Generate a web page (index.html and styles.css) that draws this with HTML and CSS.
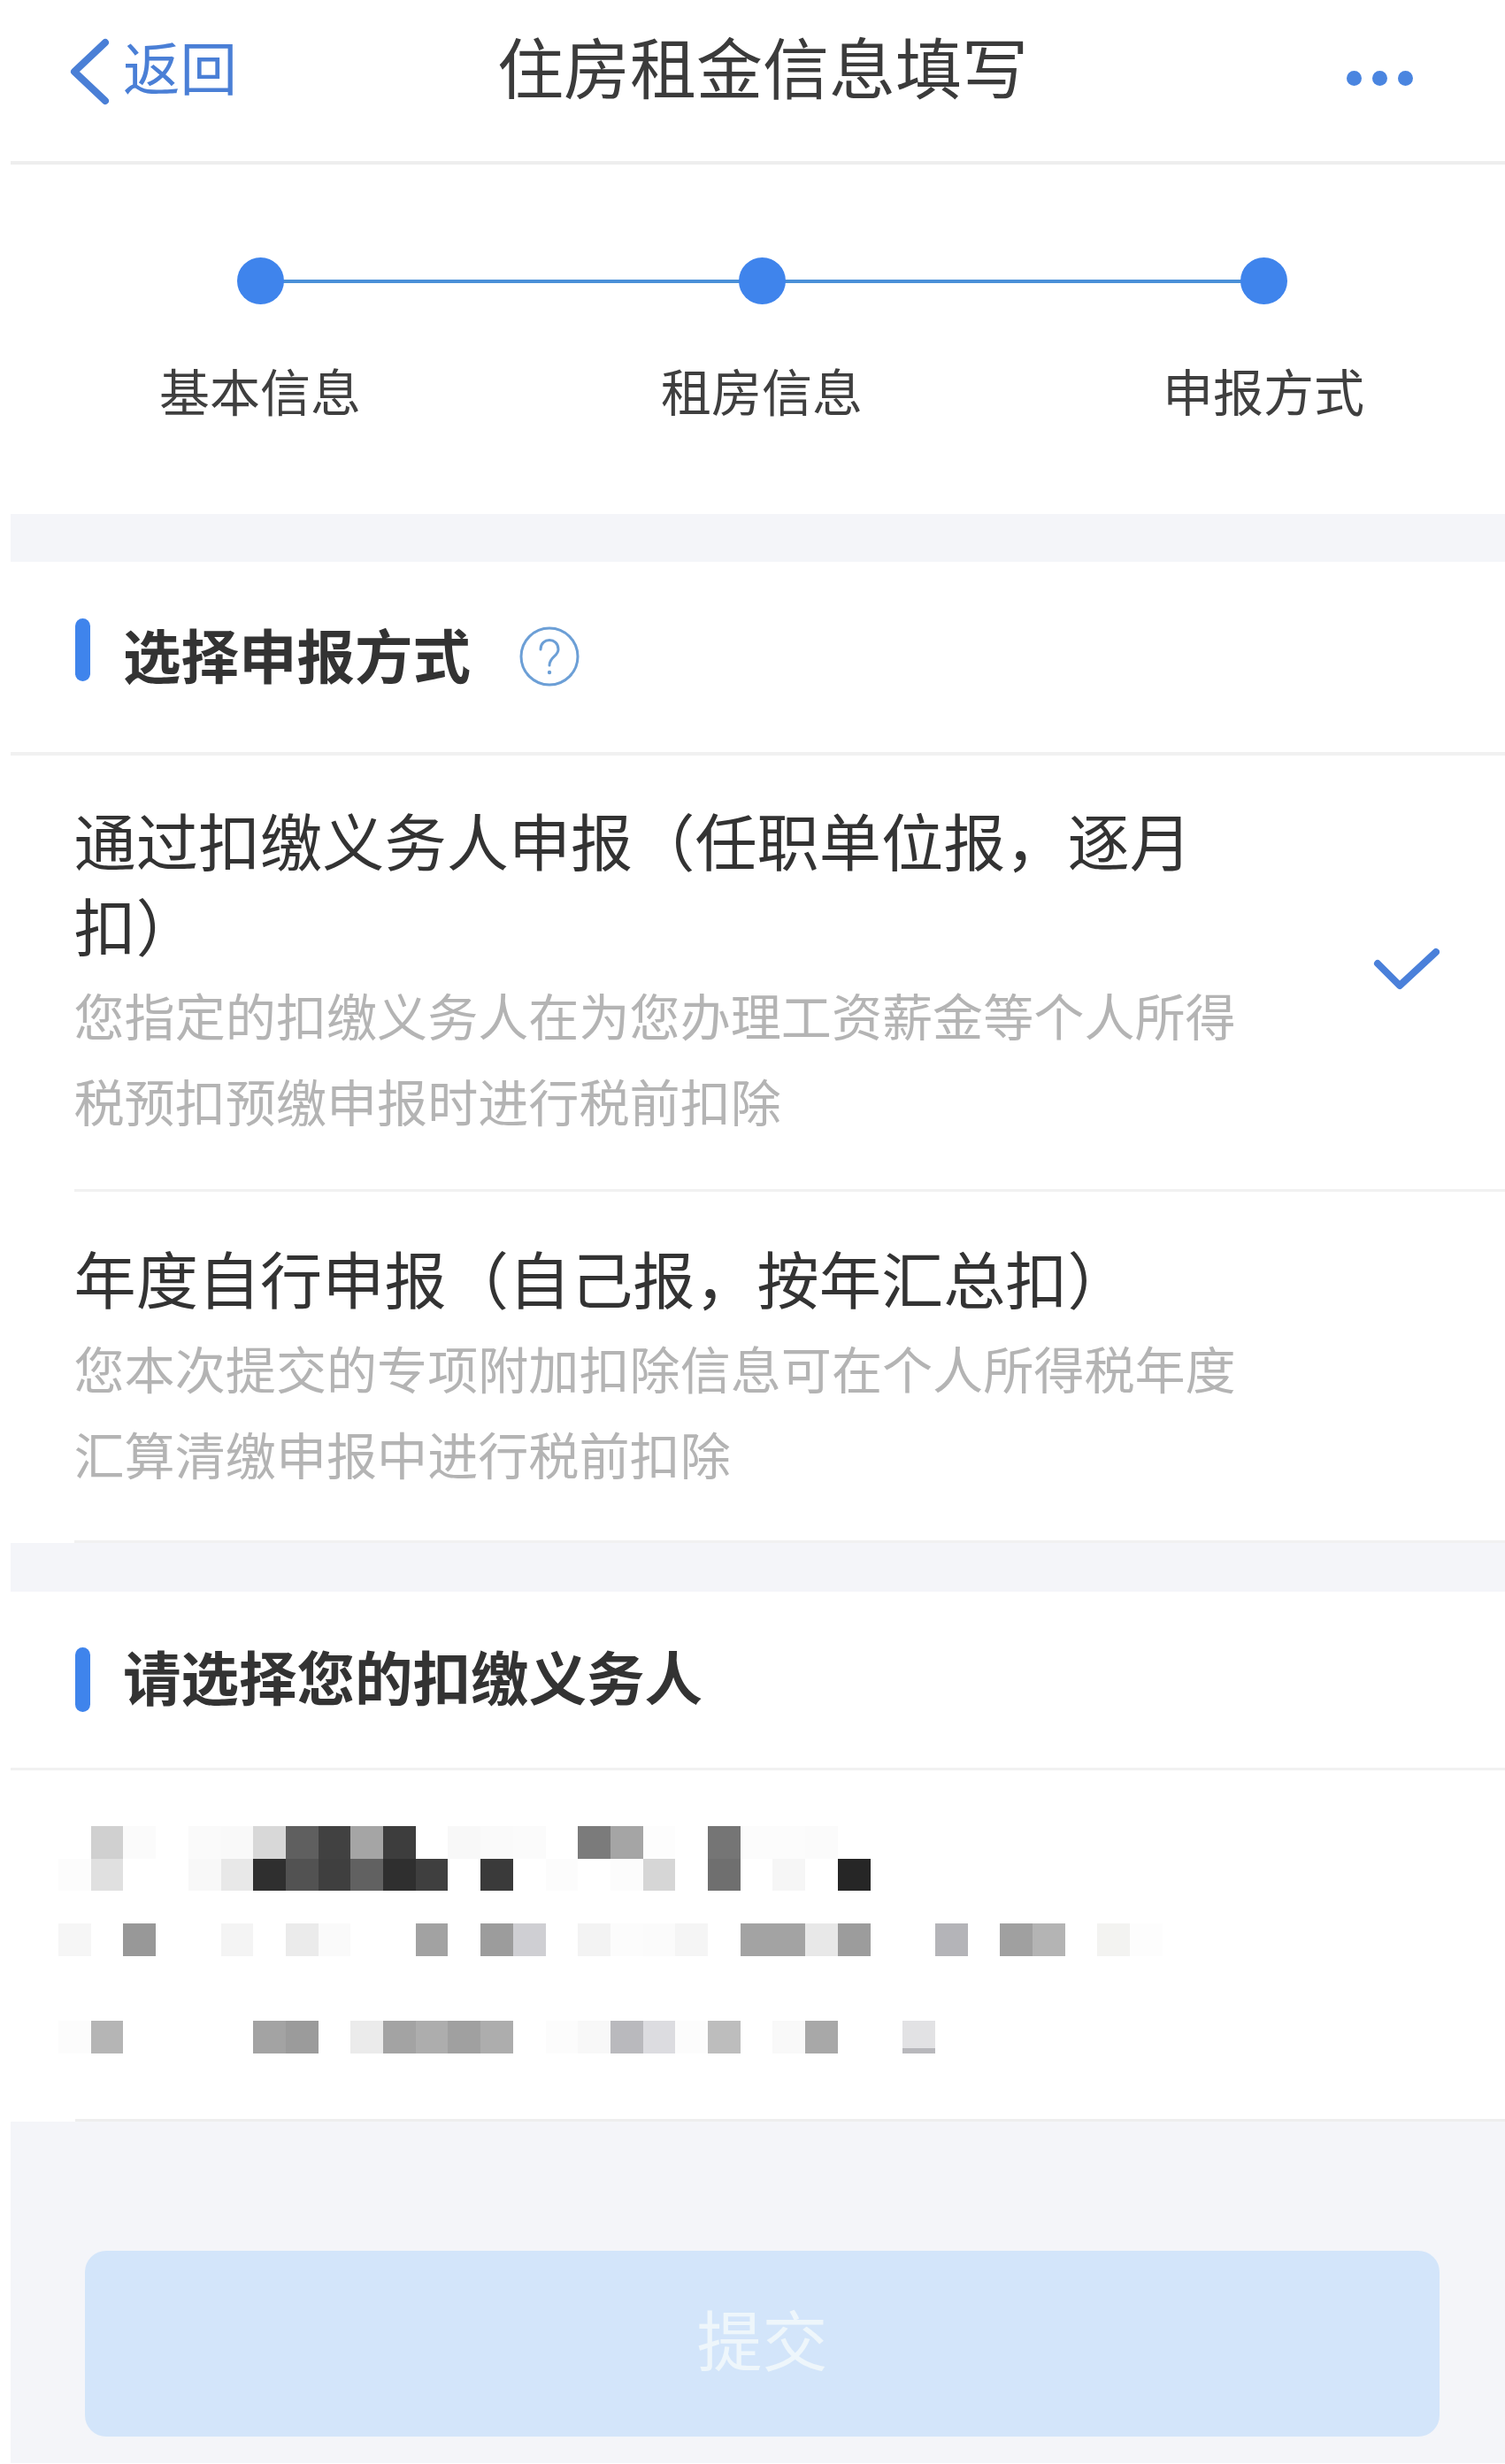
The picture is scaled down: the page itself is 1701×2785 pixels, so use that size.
FILE: index.html
```html
<!DOCTYPE html>
<html lang="zh-CN">

<head>
  <meta charset="UTF-8" />
  <meta name="viewport" content="width=device-width, initial-scale=1.0" />
  <title>住房租金信息填写</title>
  <link rel="stylesheet" href="styles.css">
</head>

<body>
  <div class="nav-bar">
    <div class="nav-back">
      <svg class="back-icon" viewBox="0 0 48 76" width="48" height="76">
        <path d="M41 5 L6 38 L41 71" fill="none" stroke="#4a7fd6" stroke-width="8" stroke-linecap="round" stroke-linejoin="round" />
      </svg>
      <span>返回</span>
    </div>
    <h1 class="nav-title">住房租金信息填写</h1>
    <div class="nav-more"><i></i><i></i><i></i></div>
  </div>

  <div class="stepper">
    <div class="step">
      <div class="step-dot"></div>
      <div class="step-label">基本信息</div>
    </div>
    <div class="step">
      <div class="step-dot"></div>
      <div class="step-label">租房信息</div>
    </div>
    <div class="step">
      <div class="step-dot"></div>
      <div class="step-label">申报方式</div>
    </div>
  </div>

  <div class="band"></div>

  <div class="section-head">
    <span class="head-bar"></span>
    <h2 class="head-title">选择申报方式</h2>
    <svg class="help-icon" viewBox="0 0 68 68" width="68" height="68">
      <circle cx="34" cy="34" r="32" fill="none" stroke="#6c9fd6" stroke-width="3" />
      <path d="M24 26 C24 12 44 12 44 26 C44 34 34 34 34 44" fill="none" stroke="#6c9fd6" stroke-width="3" stroke-linecap="round" />
      <circle cx="34" cy="52" r="2.2" fill="#6c9fd6" />
    </svg>
  </div>

  <div class="option">
    <div class="option-text">
      <div class="option-title">通过扣缴义务人申报（任职单位报，逐月扣）</div>
      <div class="option-desc">您指定的扣缴义务人在为您办理工资薪金等个人所得税预扣预缴申报时进行税前扣除</div>
    </div>
    <svg class="check-icon" viewBox="0 0 76 56" width="76" height="56">
      <path d="M6 19 L31 44 L72 6" fill="none" stroke="#4a80da" stroke-width="8" stroke-linecap="round" stroke-linejoin="round" />
    </svg>
  </div>

  <div class="option option-second">
    <div class="option-text">
      <div class="option-title">年度自行申报（自己报，按年汇总扣）</div>
      <div class="option-desc">您本次提交的专项附加扣除信息可在个人所得税年度汇算清缴申报中进行税前扣除</div>
    </div>
  </div>

  <div class="band band-small"></div>

  <div class="section-head section-head-payer">
    <span class="head-bar"></span>
    <h2 class="head-title">请选择您的扣缴义务人</h2>
  </div>

  <div class="payer">
    <!-- mosaic over the employer name and address -->
    <svg class="mosaic" viewBox="0 0 35 7" width="1284.5" height="257" shape-rendering="crispEdges">
      <g>
        <rect x="1" y="0" width="1" height="1" fill="#d0d0d0" />
        <rect x="2" y="0" width="1" height="1" fill="#fbfbfb" />
        <rect x="4" y="0" width="1" height="1" fill="#fafafa" />
        <rect x="5" y="0" width="1" height="1" fill="#f9f9f9" />
        <rect x="6" y="0" width="1" height="1" fill="#d8d8d8" />
        <rect x="7" y="0" width="1" height="1" fill="#5f5f5f" />
        <rect x="8" y="0" width="1" height="1" fill="#414141" />
        <rect x="9" y="0" width="1" height="1" fill="#a5a5a5" />
        <rect x="10" y="0" width="1" height="1" fill="#3d3d3d" />
        <rect x="12" y="0" width="1" height="1" fill="#f8f8f8" />
        <rect x="13" y="0" width="1" height="1" fill="#fafafa" />
        <rect x="14" y="0" width="1" height="1" fill="#fbfbfb" />
        <rect x="16" y="0" width="1" height="1" fill="#7b7b7b" />
        <rect x="17" y="0" width="1" height="1" fill="#a5a5a5" />
        <rect x="18" y="0" width="1" height="1" fill="#fdfdfd" />
        <rect x="20" y="0" width="1" height="1" fill="#757575" />
        <rect x="21" y="0" width="1" height="1" fill="#fcfcfc" />
        <rect x="22" y="0" width="1" height="1" fill="#fcfcfc" />
        <rect x="23" y="0" width="1" height="1" fill="#fbfbfb" />
      </g>
      <g>
        <rect x="0" y="1" width="1" height="1" fill="#fcfcfc" />
        <rect x="1" y="1" width="1" height="1" fill="#e0e0e0" />
        <rect x="4" y="1" width="1" height="1" fill="#f8f8f8" />
        <rect x="5" y="1" width="1" height="1" fill="#e8e8e8" />
        <rect x="6" y="1" width="1" height="1" fill="#2f2f2f" />
        <rect x="7" y="1" width="1" height="1" fill="#525252" />
        <rect x="8" y="1" width="1" height="1" fill="#3f3f3f" />
        <rect x="9" y="1" width="1" height="1" fill="#616161" />
        <rect x="10" y="1" width="1" height="1" fill="#2f2f2f" />
        <rect x="11" y="1" width="1" height="1" fill="#3f3f3f" />
        <rect x="13" y="1" width="1" height="1" fill="#3a3a3a" />
        <rect x="15" y="1" width="1" height="1" fill="#fcfcfc" />
        <rect x="17" y="1" width="1" height="1" fill="#fcfcfc" />
        <rect x="18" y="1" width="1" height="1" fill="#d6d6d6" />
        <rect x="20" y="1" width="1" height="1" fill="#6f6f6f" />
        <rect x="22" y="1" width="1" height="1" fill="#f6f6f6" />
        <rect x="24" y="1" width="1" height="1" fill="#262626" />
      </g>
      <g>
        <rect x="0" y="3" width="1" height="1" fill="#f6f6f6" />
        <rect x="2" y="3" width="1" height="1" fill="#989898" />
        <rect x="5" y="3" width="1" height="1" fill="#f4f4f4" />
        <rect x="7" y="3" width="1" height="1" fill="#ebebeb" />
        <rect x="8" y="3" width="1" height="1" fill="#fafafa" />
        <rect x="11" y="3" width="1" height="1" fill="#a2a2a2" />
        <rect x="13" y="3" width="1" height="1" fill="#9c9c9c" />
        <rect x="14" y="3" width="1" height="1" fill="#cfcfd3" />
        <rect x="16" y="3" width="1" height="1" fill="#f3f3f3" />
        <rect x="17" y="3" width="1" height="1" fill="#fcfcfc" />
        <rect x="18" y="3" width="1" height="1" fill="#fbfbfb" />
        <rect x="19" y="3" width="1" height="1" fill="#f5f5f5" />
        <rect x="21" y="3" width="1" height="1" fill="#a3a3a3" />
        <rect x="22" y="3" width="1" height="1" fill="#a3a3a3" />
        <rect x="23" y="3" width="1" height="1" fill="#e8e8e8" />
        <rect x="24" y="3" width="1" height="1" fill="#9c9c9c" />
        <rect x="27" y="3" width="1" height="1" fill="#b4b4b8" />
        <rect x="29" y="3" width="1" height="1" fill="#a0a0a0" />
        <rect x="30" y="3" width="1" height="1" fill="#b4b4b4" />
        <rect x="32" y="3" width="1" height="1" fill="#f3f3f1" />
        <rect x="33" y="3" width="1" height="1" fill="#fdfdfd" />
      </g>
      <g>
        <rect x="0" y="6" width="1" height="1" fill="#fcfcfc" />
        <rect x="1" y="6" width="1" height="1" fill="#b5b5b5" />
        <rect x="6" y="6" width="1" height="1" fill="#a3a3a3" />
        <rect x="7" y="6" width="1" height="1" fill="#9b9b9b" />
        <rect x="9" y="6" width="1" height="1" fill="#ebebeb" />
        <rect x="10" y="6" width="1" height="1" fill="#a3a3a3" />
        <rect x="11" y="6" width="1" height="1" fill="#adadad" />
        <rect x="12" y="6" width="1" height="1" fill="#a0a0a0" />
        <rect x="13" y="6" width="1" height="1" fill="#adadad" />
        <rect x="15" y="6" width="1" height="1" fill="#fcfcfc" />
        <rect x="16" y="6" width="1" height="1" fill="#f8f8f8" />
        <rect x="17" y="6" width="1" height="1" fill="#b9b9bd" />
        <rect x="18" y="6" width="1" height="1" fill="#dcdce0" />
        <rect x="19" y="6" width="1" height="1" fill="#fcfcfc" />
        <rect x="20" y="6" width="1" height="1" fill="#bdbdbd" />
        <rect x="22" y="6" width="1" height="1" fill="#f9f9f9" />
        <rect x="23" y="6" width="1" height="1" fill="#a8a8a8" />
        <rect x="26" y="6" width="1" height="1" fill="#e2e2e4" />
        <rect x="26" y="6.85" width="1" height="0.15" fill="#b8b8bc" />
      </g>
    </svg>
  </div>

  <div class="payer-rule"></div>

  <div class="footer">
    <button type="button" class="submit-btn">提交</button>
  </div>
</body>

</html>
```

FILE: styles.css
```css
* {
  box-sizing: border-box;
  margin: 0;
  padding: 0;
  font-family: "Noto Sans CJK SC", "Noto Sans", sans-serif;
}

body {
  background-color: #fff;
  color: #333;
  width: 1701px;
}

.nav-bar {
  display: grid;
  grid-template-columns: 484px auto 1fr;
  align-items: center;
  height: 186px;
  margin-left: 12px;
  padding: 0 104px 34px 66px;
  border-bottom: 4px solid #eeeeee;
}

.nav-back {
  display: flex;
  align-items: center;
  gap: 13px;
  color: #4a7fd6;
  font-size: 64.5px;
  line-height: 76px;
}

.back-icon {
  display: block;
  margin-top: 14px;
}

.nav-title {
  color: #3b3b3b;
  font-size: 75px;
  font-weight: 400;
  line-height: 90px;
  white-space: nowrap;
}

.nav-more {
  display: flex;
  justify-content: flex-end;
  gap: 12px;
  margin-top: 28px;
}

.nav-more i {
  width: 17px;
  height: 17px;
  border-radius: 50%;
  background-color: #4a85e0;
}

.stepper {
  display: grid;
  grid-template-columns: repeat(3, 567px);
  height: 395px;
  padding: 105px 0 0 10.5px;
}

.step {
  position: relative;
  display: flex;
  flex-direction: column;
  align-items: center;
}

.step:not(:last-child)::after {
  content: "";
  position: absolute;
  top: 25px;
  left: 50%;
  width: 100%;
  height: 4px;
  background-color: #4a90d8;
}

.step-dot {
  position: relative;
  z-index: 1;
  width: 53px;
  height: 53px;
  border-radius: 50%;
  background-color: #3f84ec;
}

.step-label {
  margin-top: 61px;
  color: #3f3f3f;
  font-size: 57px;
  line-height: 70px;
}

.band {
  height: 54px;
  margin-left: 12px;
  background-color: #f4f5f9;
}

.band-small {
  height: 55px;
}

.section-head {
  display: flex;
  align-items: flex-start;
  height: 219px;
  margin-left: 12px;
  padding: 64px 0 0 73px;
  border-bottom: 4px solid #f1f1f1;
}

.head-bar {
  flex: none;
  width: 17px;
  height: 71px;
  margin-right: 37px;
  border-radius: 9px;
  background-color: #3f84ec;
}

.head-title {
  color: #333;
  font-size: 65.5px;
  font-weight: 700;
  line-height: 80px;
  white-space: nowrap;
}

.help-icon {
  display: block;
  margin: 9px 0 0 55px;
}

.section-head-payer {
  align-items: center;
  height: 202px;
  padding-top: 60px;
  padding-bottom: 59px;
  border-bottom-width: 3px;
}

.section-head-payer .head-bar {
  height: 73px;
}

.section-head-payer .head-title {
  margin-bottom: 9px;
}

.option {
  display: flex;
  align-items: center;
  margin-left: 83.5px;
  padding: 46.5px 0 52px;
  border-bottom: 3px solid #f1f1f1;
}

.option-second {
  padding: 48.5px 0 49.5px;
}

.option-text {
  width: 1320px;
}

.option-title {
  color: #333;
  font-size: 70.2px;
  line-height: 96px;
}

.option-desc {
  margin-top: 5.5px;
  color: #b4b4b4;
  font-size: 57.1px;
  line-height: 97px;
}

.check-icon {
  display: block;
  flex: none;
  margin: 3px 0 0 147.5px;
}

.payer {
  padding: 63px 0 74px 66px;
}

.mosaic {
  display: block;
}

.payer-rule {
  height: 3px;
  margin-left: 85px;
  background-color: #eeeeee;
}

.footer {
  height: 386px;
  margin-left: 12px;
  padding: 146px 74px 30px 84px;
  background-color: #f4f5f9;
}

.submit-btn {
  display: block;
  width: 100%;
  height: 210px;
  padding-bottom: 14px;
  border: none;
  border-radius: 24px;
  background-color: #d3e5fa;
  color: #eef6fb;
  font-size: 74px;
}
```
